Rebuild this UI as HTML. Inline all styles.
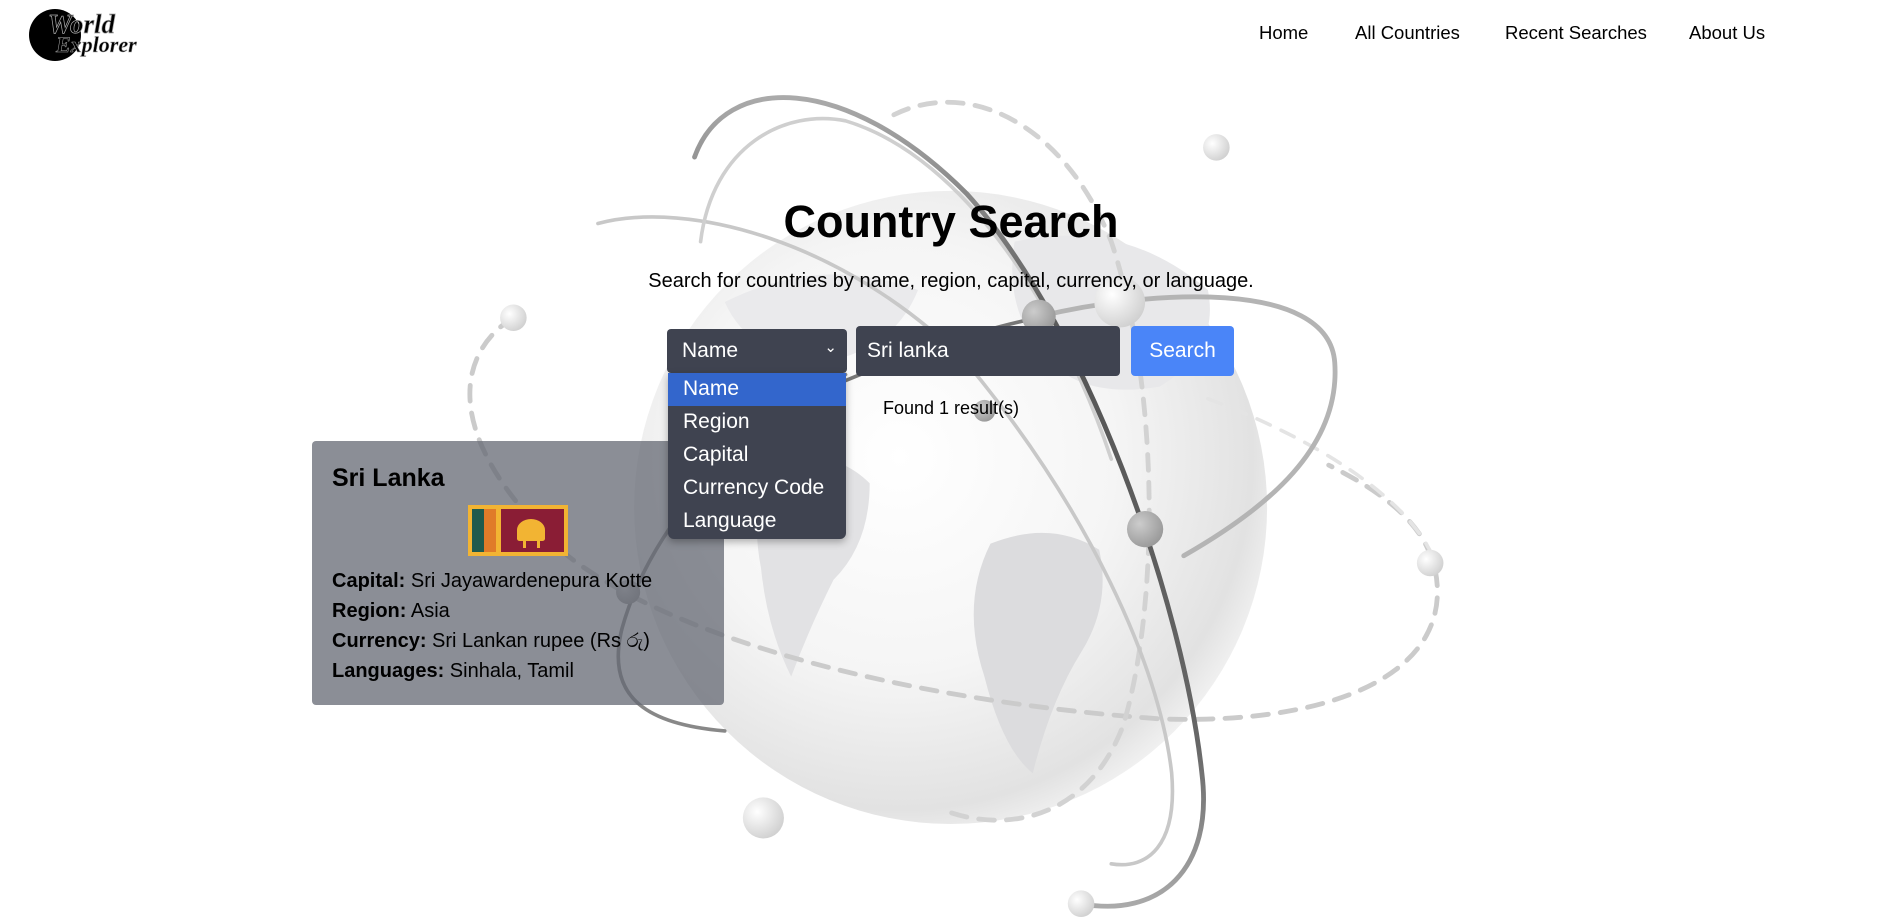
<!DOCTYPE html>
<html><head><meta charset="utf-8"><style>
*{box-sizing:border-box;margin:0;padding:0}
body{width:1894px;height:917px;overflow:hidden;background:#fff;font-family:"Liberation Sans",Arial,sans-serif;position:relative;color:#000}
.nav a{position:absolute;top:22px;font-size:18.5px;color:#000;text-decoration:none}
svg.bg{position:absolute;left:0;top:0}
.abs{position:absolute}
</style></head><body>
<svg class="bg" width="1894" height="917" viewBox="0 0 1568 759" preserveAspectRatio="none">
<defs>
<radialGradient id="g" cx="0.42" cy="0.42" r="0.62">
<stop offset="0" stop-color="#ffffff"/><stop offset="0.55" stop-color="#f5f5f5"/><stop offset="0.9" stop-color="#e2e2e2"/><stop offset="1" stop-color="#f2f2f2"/></radialGradient>
<radialGradient id="b" cx="0.35" cy="0.35" r="0.7"><stop offset="0" stop-color="#fff"/><stop offset="1" stop-color="#d0d0d0"/></radialGradient>
<radialGradient id="d" cx="0.35" cy="0.35" r="0.7"><stop offset="0" stop-color="#ccc"/><stop offset="1" stop-color="#999"/></radialGradient>
<linearGradient id="dl" x1="0" y1="0" x2="0" y2="1"><stop offset="0" stop-color="#aaa"/><stop offset="0.3" stop-color="#555"/><stop offset="0.8" stop-color="#666"/><stop offset="1" stop-color="#aaa"/></linearGradient>
</defs>
<circle cx="787" cy="420" r="262" fill="url(#g)"/>
<path d="M820 450 Q870 430 910 455 Q920 500 895 540 Q870 580 855 640 Q830 620 815 560 Q795 500 820 450Z" fill="#dcdcde"/>
<path d="M640 380 Q690 370 720 400 Q720 450 690 480 Q670 520 655 560 Q635 520 630 470 Q620 420 640 380Z" fill="#e2e2e4"/>
<path d="M840 200 Q930 180 1000 240 Q1010 290 960 320 Q900 330 870 300 Q830 260 840 200Z" fill="#e8e8ea"/>
<path d="M600 250 Q680 210 760 240 Q740 290 680 300 Q620 295 600 250Z" fill="#eaeaec"/>
<g fill="none" stroke-linecap="round">
<path d="M425 263 C380 290 360 360 470 460 C560 530 750 580 960 595 C1100 600 1190 560 1190 490 C1190 440 1150 410 1100 385" stroke="#cbcbcb" stroke-width="4" stroke-dasharray="13 10"/>
<path d="M1000 330 C1080 360 1170 410 1190 470" stroke="#e4e4e4" stroke-width="3" stroke-dasharray="12 10"/>
<path d="M740 95 C800 65 880 100 920 200 C960 320 960 500 930 600 C900 680 830 690 780 670" stroke="#d2d2d2" stroke-width="4" stroke-dasharray="13 10"/>
<path d="M495 185 C570 165 700 200 800 300 C900 420 960 550 970 640 C975 700 950 720 920 715" stroke="#c8c8c8" stroke-width="3"/>
<path d="M580 200 C590 120 650 90 700 100 C800 130 880 260 920 380" stroke="#cfcfcf" stroke-width="3"/>
<path d="M575 130 C600 60 700 60 800 160 C900 270 980 500 995 640 C1005 720 960 760 895 748" stroke="url(#dl)" stroke-width="4"/>
<path d="M700 310 C620 350 540 430 515 520 C500 580 540 600 600 605" stroke="#888" stroke-width="3"/>
<path d="M860 262 C950 240 1100 230 1105 300 C1110 370 1050 420 980 460" stroke="#b4b4b4" stroke-width="4"/>
<path d="M700 315 C760 290 820 270 865 262" stroke="#777" stroke-width="3"/>
</g>
<circle cx="425" cy="263" r="11" fill="url(#b)"/>
<circle cx="1007" cy="122" r="11" fill="url(#b)"/>
<circle cx="860" cy="262" r="14" fill="url(#d)"/>
<circle cx="927" cy="250" r="21" fill="url(#b)"/>
<circle cx="948" cy="438" r="15" fill="url(#d)"/>
<circle cx="1184" cy="466" r="11" fill="url(#b)"/>
<circle cx="632" cy="677" r="17" fill="url(#b)"/>
<circle cx="895" cy="748" r="11" fill="url(#b)"/>
<circle cx="815" cy="340" r="9" fill="url(#d)"/>
<circle cx="520" cy="490" r="10" fill="url(#d)"/>
</svg>

<div class="abs" style="left:29px;top:9px;width:52px;height:52px;border-radius:50%;background:#000"></div>
<div class="abs" style="left:48px;top:11px;font-family:'Liberation Serif',serif;font-style:italic;font-weight:bold;font-size:27px;color:#000;-webkit-text-stroke:0.7px #aaa;line-height:1">World</div>
<div class="abs" style="left:56px;top:34px;font-family:'Liberation Serif',serif;font-style:italic;font-weight:bold;font-size:22px;color:#000;-webkit-text-stroke:0.5px #aaa;line-height:1">Explorer</div>

<div class="nav"><a style="left:1259px">Home</a><a style="left:1355px">All Countries</a><a style="left:1505px">Recent Searches</a><a style="left:1689px">About Us</a></div>

<div class="abs" style="left:0;width:1902px;top:196px;text-align:center;font-size:45px;font-weight:bold">Country Search</div>
<div class="abs" style="left:0;width:1902px;top:270px;text-align:center;font-size:20px">Search for countries by name, region, capital, currency, or language.</div>

<div class="abs" style="left:667px;top:329px;width:180px;height:44px;background:#3f4350;border-radius:4px;color:#fff;font-size:21px;padding:10px 15px">Name<span style="position:absolute;right:10px;top:9px;font-size:15px">&#x2304;</span></div>
<div class="abs" style="left:856px;top:326px;width:264px;height:50px;background:#3f4350;border-radius:4px;color:#fff;font-size:21px;padding:13px 11px">Sri lanka</div>
<div class="abs" style="left:1131px;top:326px;width:103px;height:50px;background:#4a85f8;border-radius:4px;color:#fff;font-size:21px;padding:13px 0;text-align:center">Search</div>

<div class="abs" style="left:0;width:1902px;top:398px;text-align:center;font-size:18px">Found 1 result(s)</div>

<div class="abs" style="left:312px;top:441px;width:412px;height:264px;background:rgba(100,104,115,0.75);border-radius:4px;padding:20px">
<div style="font-size:25px;font-weight:bold;margin-top:3px">Sri Lanka</div>
<div style="margin:12px auto 0;width:100px;height:51px;background:#f2b433;padding:4px;display:flex">
<div style="width:12px;background:#1f5a4d"></div><div style="width:12px;background:#e07b29"></div><div style="width:5px"></div>
<div style="flex:1;background:#8a1d35;position:relative"><div style="position:absolute;left:16px;top:10px;width:28px;height:22px;background:#f2b433;border-radius:50% 50% 10% 10%"></div><div style="position:absolute;left:22px;top:30px;width:3px;height:9px;background:#f2b433"></div><div style="position:absolute;left:36px;top:30px;width:3px;height:9px;background:#f2b433"></div></div></div>
<div style="font-size:20px;line-height:30px;margin-top:10px"><b>Capital:</b> Sri Jayawardenepura Kotte<br><b>Region:</b> Asia<br><b>Currency:</b> Sri Lankan rupee (Rs රු)<br><b>Languages:</b> Sinhala, Tamil</div>
</div>

<div class="abs" style="left:668px;top:373px;width:178px;height:166px;background:#3f4350;border-radius:0 0 6px 6px;box-shadow:0 3px 8px rgba(0,0,0,.3);color:#fff;font-size:21px;overflow:hidden">
<div style="background:#3366cc;height:33px;padding:4px 15px">Name</div>
<div style="height:33px;padding:4px 15px">Region</div>
<div style="height:33px;padding:4px 15px">Capital</div>
<div style="height:33px;padding:4px 15px">Currency Code</div>
<div style="height:33px;padding:4px 15px">Language</div>
</div>
</body></html>
